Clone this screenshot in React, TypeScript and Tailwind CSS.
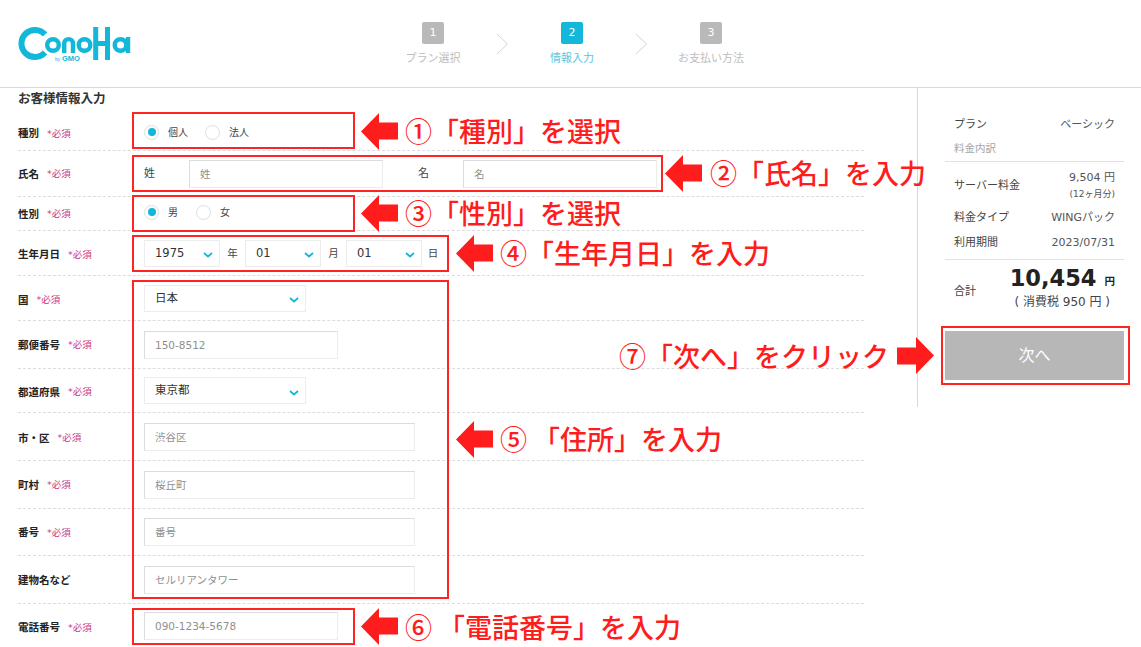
const font = "font-['DejaVu_Sans','Noto_Sans_CJK_JP',sans-serif] [text-spacing-trim:space-all]";

function Logo() {
  return (
    <svg width="116" height="36" viewBox="18 26 116 36" className="shrink-0">
      <g fill="none" stroke="#13b7d9" strokeWidth="4.4">
        <path d="M45 34.5 A13.5 13.5 0 1 0 45 52.5" strokeWidth="6" />
        <circle cx="53" cy="45" r="5.8" />
        <path d="M64.2 53 V43.5 A4.4 4.4 0 0 1 73 43.5 V53" />
        <circle cx="84.5" cy="45" r="5.8" />
        <path d="M95.7 27 V60 M107.5 27 V60 M95.7 43.5 H107.5" strokeWidth="5" />
        <circle cx="120.5" cy="45" r="5.8" />
        <path d="M128 37 V53" />
      </g>
      <text x="55" y="60.5" fontSize="5" fill="#13b7d9" fontFamily="Liberation Sans">by</text>
      <text x="62" y="60.5" fontSize="7.5" fontWeight="700" fill="#13b7d9" fontFamily="Liberation Sans">GMO</text>
    </svg>
  );
}

function Step({ n, label, active }: { n: number; label: string; active?: boolean }) {
  return (
    <div className="w-[110px] flex flex-col items-center">
      <div className={`w-[22px] h-[22px] rounded-[2px] flex items-center justify-center text-[11px] text-white ${active ? "bg-[#13b7d9]" : "bg-[#b9b9b9]"}`}>
        {n}
      </div>
      <div className={`mt-[7px] text-[11px] leading-[16px] ${active ? "text-[#5cc5de]" : "text-[#bdbdbd]"}`}>{label}</div>
    </div>
  );
}

function StepChevron() {
  return (
    <div className="w-[29px] flex justify-center pt-[11px]">
      <svg width="13" height="22" viewBox="0 0 13 22" fill="none" stroke="#d4d4d4" strokeWidth="1">
        <path d="M1 1 L11.5 11 L1 21" />
      </svg>
    </div>
  );
}

function Row({ label, required = true, h, nudge = "pt-[2px]", last, children }: { label: string; required?: boolean; h: string; nudge?: string; last?: boolean; children?: React.ReactNode }) {
  return (
    <div className={`flex items-center w-[846px] ${last ? "" : "border-b border-dashed border-[#dcdcdc]"} ${h}`}>
      <div className={`w-[126px] shrink-0 flex items-center gap-[8px] ${nudge}`}>
        <span className="text-[10.5px] font-bold text-[#222]">{label}</span>
        {required && <span className="text-[9.5px] text-[#c9367f]">*必須</span>}
      </div>
      {children}
    </div>
  );
}

function Field({ w, text }: { w: string; text: string }) {
  return (
    <div className={`${w} h-[28px] flex items-center pl-[10px] pt-[2px] text-[10.5px] text-[#8f8f8f] border border-[#ececec] border-t-[#dcdcdc] border-l-[#dcdcdc] bg-white`}>
      {text}
    </div>
  );
}

function Select({ w, text }: { w: string; text: string }) {
  return (
    <div className={`${w} h-[27px] flex items-center justify-between pl-[10px] pr-[6px] text-[11.5px] text-[#333] border border-[#ececec] bg-white`}>
      <span className="mt-[1px]">{text}</span>
      <svg width="10" height="6" viewBox="0 0 10 6" fill="none" stroke="#13b7d9" strokeWidth="1.8" className="mt-[4px]">
        <path d="M1 1 L5 4.5 L9 1" />
      </svg>
    </div>
  );
}

function Radio({ label, checked, gap }: { label: string; checked?: boolean; gap: string }) {
  return (
    <div className={`flex items-center ${gap}`}>
      <span className="w-[15px] h-[15px] rounded-full border border-[#dddddd] flex items-center justify-center mr-[9px]">
        {checked && <span className="w-[8px] h-[8px] rounded-full bg-[#13b7d9]" />}
      </span>
      <span className="text-[10px] text-[#444]">{label}</span>
    </div>
  );
}

function SideRow({ left, right, cls }: { left: string; right: React.ReactNode; cls: string }) {
  return (
    <div className={`flex justify-between items-center text-[11px] text-[#444] px-[9px] pt-[4px] ${cls}`}>
      <span>{left}</span>
      <span className="text-[#555] text-right">{right}</span>
    </div>
  );
}

// red overlays drawn on top of the page
function RedBox({ cls }: { cls: string }) {
  return <div className={`absolute border-2 border-[#ff2424] ${cls}`} />;
}

function Arrow({ cls, right }: { cls: string; right?: boolean }) {
  return (
    <svg width="37" height="37" viewBox="0 0 37 37" className={`absolute ${cls} ${right ? "rotate-180" : ""}`}>
      <polygon points="0,18.5 18,0 18,9.5 37,9.5 37,26.5 18,26.5 18,37" fill="#ff1c1c" />
    </svg>
  );
}

function Note({ cls, children }: { cls: string; children: string }) {
  return (
    <div className={`absolute font-['Noto_Sans_CJK_JP',sans-serif] text-[27px] leading-[36px] font-medium text-[#ff1c1c] whitespace-nowrap ${cls}`}>{children}</div>
  );
}

export default function App() {
  return (
    <div className={`relative w-[1141px] h-[647px] overflow-hidden bg-white ${font}`}>
      <header className="h-[88px] border-b border-[#d9d9d9] flex items-start">
        <div className="pl-[18px] pt-[26px]">
          <Logo />
        </div>
        <div className="flex ml-[244px] pt-[22px]">
          <Step n={1} label="プラン選択" />
          <StepChevron />
          <Step n={2} label="情報入力" active />
          <StepChevron />
          <Step n={3} label="お支払い方法" />
        </div>
      </header>

      <div className="flex items-start">
        <main className="w-[917px] pl-[18px] shrink-0">
          <h1 className="h-[20px] pt-[1px] text-[12.5px] leading-[20px] font-bold text-[#333]">お客様情報入力</h1>
          <Row label="種別" h="h-[43px]" nudge="pt-[10px]">
            <div className="flex pt-[6px]">
              <Radio label="個人" checked gap="mr-[17px]" />
              <Radio label="法人" gap="" />
            </div>
          </Row>
          <Row label="氏名" h="h-[46px]">
            <span className="w-[45px] pt-[2px] text-[11px] text-[#444]">姓</span>
            <Field w="w-[194px]" text="姓" />
            <span className="w-[80px] pl-[35px] pt-[2px] text-[11px] text-[#444]">名</span>
            <Field w="w-[194px]" text="名" />
          </Row>
          <Row label="性別" h="h-[34px]">
            <div className="flex mb-[3px]">
              <Radio label="男" checked gap="mr-[18px]" />
              <Radio label="女" gap="" />
            </div>
          </Row>
          <Row label="生年月日" h="h-[45px]" nudge="pt-[4px]">
            <div className="flex items-center">
              <Select w="w-[76px]" text="1975" />
              <span className="w-[25px] pt-[2px] text-center text-[10.5px] text-[#444]">年</span>
              <Select w="w-[76px]" text="01" />
              <span className="w-[25px] pt-[2px] text-center text-[10.5px] text-[#444]">月</span>
              <Select w="w-[76px]" text="01" />
              <span className="w-[22px] pt-[2px] text-center text-[10.5px] text-[#444]">日</span>
            </div>
          </Row>
          <Row label="国" h="h-[45px]" nudge="pt-[5px]">
            <Select w="w-[162px]" text="日本" />
          </Row>
          <Row label="郵便番号" h="h-[48px]">
            <Field w="w-[194px]" text="150-8512" />
          </Row>
          <Row label="都道府県" h="h-[44px]" nudge="pt-[4px]">
            <Select w="w-[162px]" text="東京都" />
          </Row>
          <Row label="市・区" h="h-[48px]" nudge="pt-[4px]">
            <Field w="w-[271px]" text="渋谷区" />
          </Row>
          <Row label="町村" h="h-[48px]">
            <Field w="w-[271px]" text="桜丘町" />
          </Row>
          <Row label="番号" h="h-[47px]">
            <Field w="w-[271px]" text="番号" />
          </Row>
          <Row label="建物名など" required={false} h="h-[48px]">
            <Field w="w-[271px]" text="セルリアンタワー" />
          </Row>
          <Row label="電話番号" last h="h-[43px]" nudge="pt-[5px]">
            <Field w="w-[194px]" text="090-1234-5678" />
          </Row>
        </main>
        <aside className="w-[224px] h-[319px] border-l border-[#d9d9d9] pl-[27px] pr-[16px]">
          <div className="w-[179px] pt-[24px]">
            <SideRow left="プラン" right="ベーシック" cls="h-[22px]" />
            <div className="h-[28px] flex items-center pt-[2px] px-[9px] text-[10.5px] text-[#a5a5a5] border-b border-[#e2e2e2]">料金内訳</div>
            <SideRow
              left="サーバー料金"
              cls="h-[44px]"
              right={
                <span className="flex flex-col">
                  <span className="leading-[16px]">9,504 円</span>
                  <span className="text-[9px] leading-[16px]">(12ヶ月分)</span>
                </span>
              }
            />
            <SideRow left="料金タイプ" right="WINGパック" cls="h-[20px]" />
            <SideRow left="利用期間" right="2023/07/31" cls="h-[30px]" />
            <div className="border-t border-[#e2e2e2] mt-[3px] h-[60px] flex justify-between items-center px-[9px]">
              <span className="mt-[5px] text-[11px] text-[#444]">合計</span>
              <div className="flex flex-col items-end -mt-[2px]">
                <div className="flex items-end">
                  <span className="text-[22.5px] font-bold text-[#222] leading-[26px]">10,454</span>
                  <span className="text-[10.5px] font-bold text-[#222] leading-[20px] ml-[8px]">円</span>
                </div>
                <div className="mt-[2px] text-[12px] leading-[19px] text-[#444] mr-[5px]">( 消費税 950 円 )</div>
              </div>
            </div>
            <button className="mt-[12px] w-[179px] h-[49px] bg-[#b7b7b7] text-white text-[16px]">次へ</button>
          </div>
        </aside>
      </div>

      <RedBox cls="left-[132px] top-[112px] w-[223px] h-[37px]" />
      <RedBox cls="left-[132px] top-[155px] w-[531px] h-[37px]" />
      <RedBox cls="left-[132px] top-[195px] w-[223px] h-[37px]" />
      <RedBox cls="left-[132px] top-[235px] w-[317px] h-[37px]" />
      <RedBox cls="left-[132px] top-[280px] w-[317px] h-[319px]" />
      <RedBox cls="left-[132px] top-[608px] w-[223px] h-[37px]" />
      <RedBox cls="left-[941px] top-[326px] w-[189px] h-[59px]" />

      <Arrow cls="left-[361px] top-[113px]" />
      <Arrow cls="left-[665px] top-[155px]" />
      <Arrow cls="left-[361px] top-[195px]" />
      <Arrow cls="left-[456px] top-[235px]" />
      <Arrow cls="left-[456px] top-[421px]" />
      <Arrow cls="left-[361px] top-[608px]" />
      <Arrow cls="left-[897px] top-[337px]" right />

      <Note cls="left-[405px] top-[113px]">①「種別」を選択</Note>
      <Note cls="left-[710px] top-[155px]">②「氏名」を入力</Note>
      <Note cls="left-[405px] top-[195px]">③「性別」を選択</Note>
      <Note cls="left-[500px] top-[235px]">④「生年月日」を入力</Note>
      <Note cls="left-[500px] top-[421px]">⑤ 「住所」を入力</Note>
      <Note cls="left-[405px] top-[609px]">⑥ 「電話番号」を入力</Note>
      <Note cls="left-[619px] top-[338px]">⑦「次へ」をクリック</Note>
    </div>
  );
}
